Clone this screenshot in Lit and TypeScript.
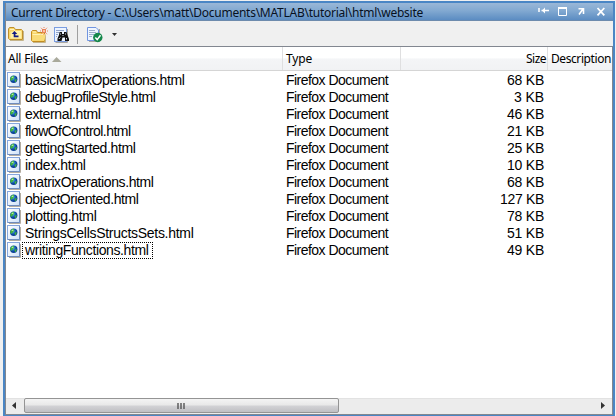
import { LitElement, html, css, svg } from "lit";
import { customElement, property } from "lit/decorators.js";

/** A label whose tracking is adjusted so that it spans a given width. */
@customElement("fit-label")
class FitLabel extends LitElement {
  @property() text = "";
  @property({ type: Number }) span = 0;
  static styles = css`
    :host { display: inline-block; white-space: pre; }
    span { display: inline-block; }
  `;
  updated() {
    const el = this.renderRoot.querySelector("span") as HTMLElement;
    el.style.letterSpacing = "0px";
    const natural = el.getBoundingClientRect().width;
    el.style.letterSpacing = `${(this.span - natural) / this.text.length}px`;
  }
  render() {
    return html`<span>${this.text}</span>`;
  }
}

const files: [string, number, string, number][] = [
  ["basicMatrixOperations.html", 159.5, "68 KB", 37],
  ["debugProfileStyle.html", 130.5, "3 KB", 30],
  ["external.html", 75.5, "46 KB", 37],
  ["flowOfControl.html", 105.5, "21 KB", 37],
  ["gettingStarted.html", 110.5, "25 KB", 37],
  ["index.html", 60.5, "10 KB", 37],
  ["matrixOperations.html", 128.5, "68 KB", 37],
  ["objectOriented.html", 113.5, "127 KB", 44],
  ["plotting.html", 71.5, "78 KB", 37],
  ["StringsCellsStructsSets.html", 168.5, "51 KB", 37],
  ["writingFunctions.html", 123.5, "49 KB", 37],
];

const fileIcon = svg`
  <svg class="file" width="14" height="16" viewBox="0 0 14 16">
    <defs>
      <linearGradient id="pg" x2="1" y2="1"><stop stop-color="#fff"/><stop offset="1" stop-color="#cfe2f9"/></linearGradient>
      <radialGradient id="gl" cx=".4" cy=".35"><stop stop-color="#7cc4f5"/><stop offset=".5" stop-color="#1f6fc8"/><stop offset="1" stop-color="#0a3f96"/></radialGradient>
    </defs>
    <path d="M2 15.5H13.5V2" stroke="#b3aca0" fill="none"/>
    <rect x=".5" y=".5" width="12" height="14" fill="url(#pg)" stroke="#86a6dd"/>
    <path d="M12.5 1V14.5H1" fill="none" stroke="#6f8cbd"/>
    <circle cx="6.7" cy="7.3" r="3.7" fill="url(#gl)"/>
    <path d="M3.2 7Q3.6 4 7 3.8L7.2 6L6 7L5 8.6L3.6 8.4ZM7.5 7.8L9.7 7L9.2 9.5L8 10.3Z" fill="#43b53c"/>
    <path d="M4.7 5.3H6.4" stroke="#c8f2cc"/>
  </svg>`;

const upFolder = svg`
  <svg width="16" height="14" viewBox="0 0 16 14">
    <path d="M2 13.5H15.5V4" fill="none" stroke="#c4b48b"/>
    <path d="M.5 11.5V2L1.5.5H6L7.5 2.5H13.5L14.5 3.5V12.5H1.5Z" fill="#f8d568" stroke="#c0902c"/>
    <path d="M2 2.5H6L7 4.5H13" stroke="#fff4bd" fill="none"/>
    <path d="M3.5 4.5H13.5V11.5H2.5V5.5Z" fill="#fff0a5"/>
    <path d="M6.5 4L3.7 7H5.7V10.2H10.5V8.6H7.4V7H9.3Z" fill="#101a83"/>
  </svg>`;

const newFolder = svg`
  <svg class="new" width="18" height="16" viewBox="0 0 18 16">
    <path d="M2 15.5H14.5V7" fill="none" stroke="#c4b48b"/>
    <path d="M.5 13.5V4.5L1.5 3.5H5.5L6.5 5.5H13.5V14.5H1.5Z" fill="#f8d568" stroke="#c38d22"/>
    <path d="M1.5 7.5H14.5L13.5 13.5H1.5Z" fill="#f9dc79"/>
    <path d="M1.5 7.5H14.5M2 5H5" stroke="#fff3b6"/>
    <g stroke="#e98058" fill="none">
      <rect x="11.5" y="2.5" width="3" height="3" fill="#fac4a0"/>
      <path d="M10 .8L11 1.8M15 1.8L16 .8M10 7.2L11 6.2M15 6.2L16 7.2M13 0V1M16 4H17M9 4H10M13 7V8"/>
    </g>
  </svg>`;

const find = svg`
  <svg class="find" width="17" height="16" viewBox="0 0 17 16">
    <path d="M1.5 15.5H13.5V2" stroke="#aaa6a0" fill="none"/>
    <rect x=".5" y=".5" width="12" height="14" fill="#edf4ff" stroke="#7b9de0"/>
    <path d="M2 3.5H10M2 5.5H5M2 7.5H4M2 9.5H3" stroke="#91a4c8"/>
    <path d="M5.5 5H8V7H10V5H12.5L13.5 8L15 12V14H11V10.5H8.5L7.5 14H3.5V11.5L5 8Z" fill="#101010"/>
    <path d="M6.5 6.5V7.5M11.5 6.5V7.5M4.8 12L6.3 10.5M12.5 11V12.5M8.5 8.5H9.5" stroke="#cdd5e2"/>
  </svg>`;

const report = svg`
  <svg width="16" height="16" viewBox="0 0 16 16">
    <path d="M2 14.5H12.5V2" stroke="#aaa6a0" fill="none"/>
    <path d="M.5.5H9L11.5 3V13.5H.5Z" fill="#eff5ff" stroke="#7195e0"/>
    <path d="M2 3.5H8M2 5.5H9M2 7.5H7M2 9.5H5" stroke="#9caeca"/>
    <circle cx="10.8" cy="10.5" r="4.7" fill="#15884b"/>
    <path d="M8.3 10.5L10.2 12.6L13.5 8.2" stroke="#fff" stroke-width="1.5" fill="none"/>
  </svg>`;

@customElement("app-root")
class AppRoot extends LitElement {
  static styles = css`
    :host { display: block; box-sizing: border-box; width: 616px; height: 416px; padding: 1px 0 0 3px; background: #f0f0f0; overflow: hidden; }
    * { box-sizing: border-box; }
    svg { display: block; flex: none; }
    .window { width: 612px; height: 415px; border: solid #4a86c5; border-width: 2px 2px 1px 2px;
      display: flex; flex-direction: column; background: #fff; }
    .title { height: 18px; flex: none; display: flex; align-items: center; padding: 1px 8px 0 5px;
      border-left: 1px solid #81868c; border-bottom: 1px solid #6d8bad;
      background: linear-gradient(#9ab7d7, #82a9d1 45%, #5b8cc2);
      font: 12px/17px "Noto Sans", sans-serif; color: #07111f; }
    .title .controls { margin-left: auto; }
    .tools { height: 25px; flex: none; display: flex; align-items: flex-start; background: #f0f0f0; padding-left: 2px; border-left: 1px solid #858585; }
    .tools svg { margin-top: 6px; }
    .tools .new { margin-left: 7px; }
    .tools .find { margin-left: 5px; }
    .sep { width: 1px; height: 19px; margin: 4px 9px 0 6px; background: #a0a0a0; }
    .panel { flex: 1; min-height: 0; display: flex; flex-direction: column; border: 1px solid #828790; }
    .head { height: 24px; flex: none; display: grid; grid-template-columns: 277px 118px 147px 1fr;
      font: 12px/22px "Noto Sans", sans-serif; background: linear-gradient(#fff 45%, #f4f5f7 50%, #f1f2f4 96%, #d5d5d5 97%); }
    .head > div { display: flex; align-items: center; height: 23px; padding-left: 2px; border-right: 1px solid #dfdfe0; }
    .head > div:nth-child(2) { padding-left: 3px; }
    .head > div:last-child { border: 0; padding-left: 3px; }
    .head .size { justify-content: flex-end; padding-right: 1px; }
    .rows { flex: 1; min-height: 0; padding-top: 1px; font: 14px/17px "Liberation Sans", Arial, sans-serif; color: #000; }
    .row { height: 17px; display: grid; grid-template-columns: 277px 118px 143px; }
    .name { display: flex; padding-left: 1px; }
    .name .label { height: 17px; padding-left: 3px; margin-left: 1px; }
    .name .focus { width: 131px; outline: 1px dotted #000; outline-offset: -1px; }
    .type { padding-left: 3px; }
    .kb { text-align: right; }
    .scroll { height: 16px; flex: none; display: flex; background: #ececec; box-shadow: inset 0 1px #e2e2e2; }
    .btn { width: 18px; height: 15px; display: flex; align-items: center; justify-content: center; }
    .btn.right { margin-left: auto; }
    .thumb { width: 315px; height: 15px; border: 1px solid #949494; border-radius: 2px;
      background: linear-gradient(#f4f4f4, #e8e8e8 48%, #d3d3d6 52%, #bfbfc3); display: flex; align-items: center; justify-content: center; }
  `;

  render() {
    return html`
      <div class="window">
        <div class="title">
          <fit-label .text=${"Current Directory - C:\\Users\\matt\\Documents\\MATLAB\\tutorial\\html\\website"} .span=${412}></fit-label>
          <svg class="controls" width="68" height="12" viewBox="0 0 68 12" fill="none" stroke="#fff">
            <path d="M2 2V6M4.5 4.5H12" stroke-width="1.5"/><path d="M8 1.5L5 4.5L8 7.5Z" fill="#fff" stroke="none"/>
            <path d="M21.5 2V9.5H29.5V1.5H21.5"/><path d="M21 2H30" stroke-width="2"/>
            <path d="M41.5 2.7H46.5V8M46 3L42 8.5" stroke-width="1.6"/>
            <path d="M60.5 2L67.3 9.3M67.3 2L60.5 9.3" stroke-width="1.8"/>
          </svg>
        </div>
        <div class="tools">
          ${upFolder}${newFolder}${find}
          <div class="sep"></div>${report}
          <svg width="20" height="14" viewBox="0 0 20 14"><path d="M9 6H14L11.5 9Z" fill="#303030"/></svg>
        </div>
        <div class="panel">
          <div class="head">
            <div><fit-label .text=${"All Files"} .span=${40}></fit-label>
              <svg width="16" height="8" viewBox="0 0 16 8"><path d="M4 7L8.5 2L13.5 7Z" fill="#a9a99b"/></svg></div>
            <div><fit-label .text=${"Type"} .span=${26}></fit-label></div>
            <div class="size"><fit-label .text=${"Size"} .span=${20}></fit-label></div>
            <div><fit-label .text=${"Description"} .span=${60}></fit-label></div>
          </div>
          <div class="rows">
            ${files.map(([name, w, size, sw], i) => html`
              <div class="row">
                <div class="name">${fileIcon}
                  <div class="label ${i === files.length - 1 ? "focus" : ""}"><fit-label .text=${name} .span=${w}></fit-label></div>
                </div>
                <div class="type"><fit-label .text=${"Firefox Document"} .span=${102}></fit-label></div>
                <div class="kb"><fit-label .text=${size} .span=${sw}></fit-label></div>
              </div>`)}
          </div>
          <div class="scroll">
            <div class="btn"><svg width="6" height="7"><path d="M4 0V7L0 3.5Z" fill="#333"/></svg></div>
            <div class="thumb"><svg width="9" height="6"><path d="M1 0V6M4 0V6M7 0V6" stroke="#555" stroke-width="1.4"/></svg></div>
            <div class="btn right"><svg width="4" height="7"><path d="M0 0V7L4 3.5Z" fill="#333"/></svg></div>
          </div>
        </div>
      </div>`;
  }
}
